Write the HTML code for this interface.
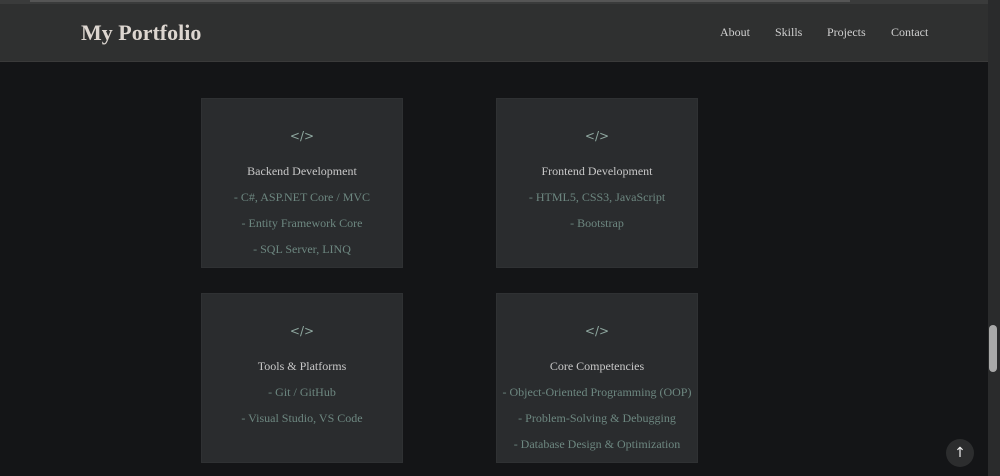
<!DOCTYPE html>
<html><head><style>
*{margin:0;padding:0;box-sizing:border-box}
body{width:1000px;height:476px;background:#141517;overflow:hidden;position:relative;font-family:"Liberation Serif","DejaVu Serif",serif}
.top{position:absolute;left:0;top:0;width:1000px;height:4px;background:#3a3b3b}
.top i{position:absolute;left:30px;top:0;width:820px;height:2px;background:#555}
.hdr{position:absolute;left:0;top:4px;width:988px;height:58px;background:#2f3030;border-bottom:1px solid #3a3a3a}
.logo{position:absolute;left:81px;top:16px;font-size:22px;font-weight:bold;color:#ddd6d0}
.nav{position:absolute;top:21px;font-size:12px;color:#d0d0d0}
.card{position:absolute;width:202px;height:170px;background:#2a2c2e;text-align:center;border:1px solid #2f3133}
.ic{position:absolute;left:0;width:100%;top:30px;color:#8fa8a0;font-size:12px;font-family:"DejaVu Sans",sans-serif}
.t{position:absolute;left:0;width:100%;top:65px;color:#c8c8c8;font-size:12px}
.l{position:absolute;left:0;width:100%;color:#6d8780;font-size:12px;white-space:nowrap}
.sb{position:absolute;left:988px;top:0;width:12px;height:476px;background:#2a2b2c}
.th{position:absolute;left:989px;top:325px;width:8px;height:47px;background:#a9a9a9;border-radius:4px}
.up{position:absolute;left:946px;top:439px;width:28px;height:28px;border-radius:50%;background:#2c2d2e;color:#eee;text-align:center;line-height:28px;font-size:14px;font-family:"DejaVu Sans",sans-serif}
</style></head><body>
<div class="top"><i></i></div>
<div class="hdr">
<div class="logo">My Portfolio</div>
<div class="nav" style="left:720px">About</div>
<div class="nav" style="left:775px">Skills</div>
<div class="nav" style="left:827px">Projects</div>
<div class="nav" style="left:891px">Contact</div>
</div>
<div class="card" style="left:201px;top:98px"><div class="ic">&lt;/&gt;</div><div class="t">Backend Development</div>
<div class="l" style="top:91px">- C#, ASP.NET Core / MVC</div><div class="l" style="top:117px">- Entity Framework Core</div><div class="l" style="top:143px">- SQL Server, LINQ</div></div>
<div class="card" style="left:496px;top:98px"><div class="ic">&lt;/&gt;</div><div class="t">Frontend Development</div>
<div class="l" style="top:91px">- HTML5, CSS3, JavaScript</div><div class="l" style="top:117px">- Bootstrap</div></div>
<div class="card" style="left:201px;top:293px"><div class="ic">&lt;/&gt;</div><div class="t">Tools &amp; Platforms</div>
<div class="l" style="top:91px">- Git / GitHub</div><div class="l" style="top:117px">- Visual Studio, VS Code</div></div>
<div class="card" style="left:496px;top:293px"><div class="ic">&lt;/&gt;</div><div class="t">Core Competencies</div>
<div class="l" style="top:91px">- Object-Oriented Programming (OOP)</div><div class="l" style="top:117px">- Problem-Solving &amp; Debugging</div><div class="l" style="top:143px">- Database Design &amp; Optimization</div></div>
<div class="sb"></div><div class="th"></div>
<div class="up">↑</div>
</body></html>
